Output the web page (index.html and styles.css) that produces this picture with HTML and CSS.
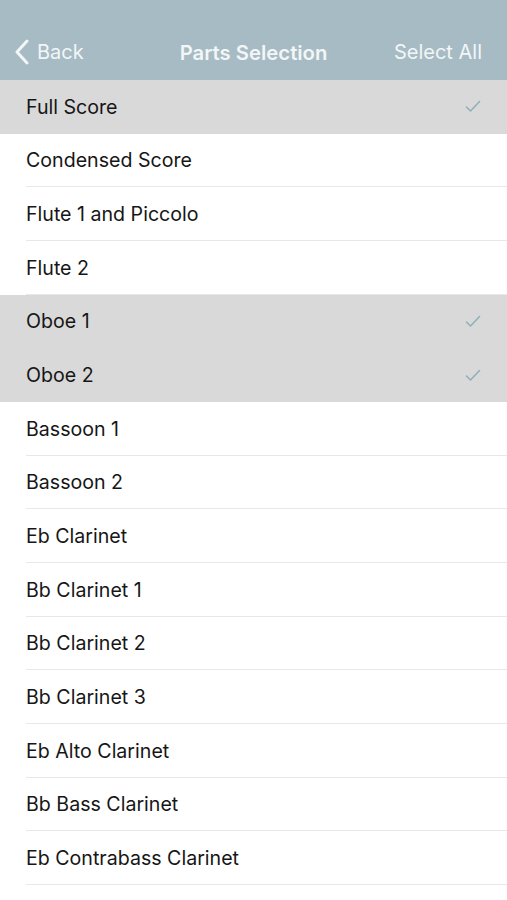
FILE: index.html
```html
<!DOCTYPE html>
<html>
<head>
<meta charset="utf-8">
<link rel="stylesheet" href="styles.css">
</head>
<body>
<header class="nav">
  <div class="nav-left">
    <svg class="chev" width="14" height="26" viewBox="0 0 14 26"><path d="M12 2 L2 13 L12 24" fill="none" stroke="#f2f6f7" stroke-width="3" stroke-linecap="round" stroke-linejoin="round"/></svg>
    <span>Back</span>
  </div>
  <div class="nav-title">Parts Selection</div>
  <div class="nav-right">Select All</div>
</header>
<ul class="list">
  <li class="row sel"><span>Full Score</span><svg class="check" width="16" height="13" viewBox="0 0 16 13"><path d="M1.5 7 L5.5 11 L14.5 1.5" fill="none" stroke="#8fb1b9" stroke-width="1.6" stroke-linecap="round" stroke-linejoin="round"/></svg></li>
  <li class="row"><span>Condensed Score</span></li>
  <li class="row"><span>Flute 1 and Piccolo</span></li>
  <li class="row"><span>Flute 2</span></li>
  <li class="row sel"><span>Oboe 1</span><svg class="check" width="16" height="13" viewBox="0 0 16 13"><path d="M1.5 7 L5.5 11 L14.5 1.5" fill="none" stroke="#8fb1b9" stroke-width="1.6" stroke-linecap="round" stroke-linejoin="round"/></svg></li>
  <li class="row sel"><span>Oboe 2</span><svg class="check" width="16" height="13" viewBox="0 0 16 13"><path d="M1.5 7 L5.5 11 L14.5 1.5" fill="none" stroke="#8fb1b9" stroke-width="1.6" stroke-linecap="round" stroke-linejoin="round"/></svg></li>
  <li class="row"><span>Bassoon 1</span></li>
  <li class="row"><span>Bassoon 2</span></li>
  <li class="row"><span>Eb Clarinet</span></li>
  <li class="row"><span>Bb Clarinet 1</span></li>
  <li class="row"><span>Bb Clarinet 2</span></li>
  <li class="row"><span>Bb Clarinet 3</span></li>
  <li class="row"><span>Eb Alto Clarinet</span></li>
  <li class="row"><span>Bb Bass Clarinet</span></li>
  <li class="row"><span>Eb Contrabass Clarinet</span></li>
</ul>
</body>
</html>
```
FILE: styles.css
```css
html, body {
  margin: 0;
  padding: 0;
  background: #ffffff;
  overflow: hidden;
}
body {
  font-family: Inter, "Liberation Sans", sans-serif;
  color: #161616;
}
.nav {
  height: 80px;
  background: #a7bbc4;
  display: grid;
  grid-template-columns: 1fr auto 1fr;
  align-items: center;
  padding: 24px 25px 0 15px;
  box-sizing: border-box;
  color: #f2f6f7;
  font-size: 20px;
}
.nav-left {
  display: flex;
  align-items: center;
  gap: 8px;
}
.chev { display: block; }
.nav-title {
  font-weight: 600;
  font-size: 20.3px;
  text-align: center;
  margin-left: 10px;
}
.nav-right {
  text-align: right;
}
.list {
  list-style: none;
  margin: 0;
  padding: 0;
}
.row {
  height: 53.67px;
  display: flex;
  align-items: center;
  justify-content: space-between;
  padding: 0 26px 0 26px;
  box-sizing: border-box;
  font-size: 19.6px;
  position: relative;
  background: #ffffff;
}
.row::after {
  content: "";
  position: absolute;
  left: 26px;
  right: 0;
  bottom: 0;
  height: 1px;
  background: #e8e8e8;
}
.row.sel {
  background: #d9d9d9;
}
.row.sel::after {
  display: none;
}
.check {
  display: block;
}
```
